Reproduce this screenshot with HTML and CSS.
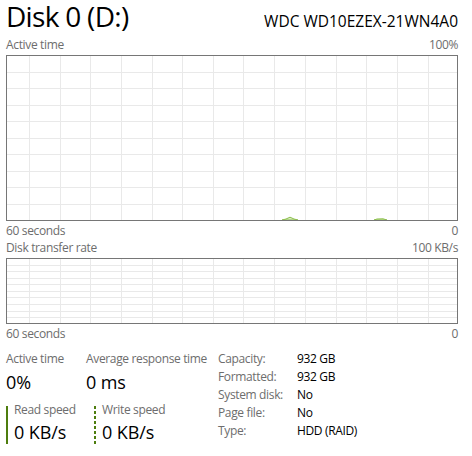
FILE: index.html
```html
<!DOCTYPE html>
<html lang="en">
<head>
<meta charset="utf-8">
<title>Disk 0 (D:)</title>
<link rel="stylesheet" href="styles.css">
</head>
<body>
<div class="page">
  <header class="head">
    <h1 class="title">Disk 0 (D:)</h1>
    <div class="model">WDC WD10EZEX-21WN4A0</div>
  </header>

  <div class="axis axis-top"><span>Active time</span><span>100%</span></div>
  <div class="graph graph-tall">
    <svg class="grid" width="450" height="164" viewBox="0 0 450 164" shape-rendering="crispEdges">
      <g class="gridlines">
        <rect x="22" y="0" width="1" height="164"/><rect x="53" y="0" width="1" height="164"/>
        <rect x="83" y="0" width="1" height="164"/><rect x="114" y="0" width="1" height="164"/>
        <rect x="145" y="0" width="1" height="164"/><rect x="175" y="0" width="1" height="164"/>
        <rect x="206" y="0" width="1" height="164"/><rect x="236" y="0" width="1" height="164"/>
        <rect x="267" y="0" width="1" height="164"/><rect x="298" y="0" width="1" height="164"/>
        <rect x="329" y="0" width="1" height="164"/><rect x="359" y="0" width="1" height="164"/>
        <rect x="390" y="0" width="1" height="164"/><rect x="421" y="0" width="1" height="164"/>
        <rect x="0" y="16" width="450" height="1"/><rect x="0" y="32" width="450" height="1"/>
        <rect x="0" y="49" width="450" height="1"/><rect x="0" y="65" width="450" height="1"/>
        <rect x="0" y="82" width="450" height="1"/><rect x="0" y="98" width="450" height="1"/>
        <rect x="0" y="115" width="450" height="1"/><rect x="0" y="131" width="450" height="1"/>
        <rect x="0" y="148" width="450" height="1"/>
      </g>
      <g class="trace" shape-rendering="auto">
        <path d="M275 164 L279 163 L283 161.2 L287 163 L291 164 Z"/>
        <path d="M367 164 L370 163 L376 162.8 L380 164 Z"/>
      </g>
    </svg>
  </div>
  <div class="axis axis-bottom"><span>60 seconds</span><span>0</span></div>

  <div class="axis axis-top axis-gap"><span>Disk transfer rate</span><span>100 KB/s</span></div>
  <div class="graph graph-short">
    <svg class="grid" width="450" height="64" viewBox="0 0 450 64" shape-rendering="crispEdges">
      <g class="gridlines">
        <rect x="22" y="0" width="1" height="64"/><rect x="53" y="0" width="1" height="64"/>
        <rect x="83" y="0" width="1" height="64"/><rect x="114" y="0" width="1" height="64"/>
        <rect x="145" y="0" width="1" height="64"/><rect x="175" y="0" width="1" height="64"/>
        <rect x="206" y="0" width="1" height="64"/><rect x="236" y="0" width="1" height="64"/>
        <rect x="267" y="0" width="1" height="64"/><rect x="298" y="0" width="1" height="64"/>
        <rect x="329" y="0" width="1" height="64"/><rect x="359" y="0" width="1" height="64"/>
        <rect x="390" y="0" width="1" height="64"/><rect x="421" y="0" width="1" height="64"/>
        <rect x="0" y="6" width="450" height="1"/><rect x="0" y="12" width="450" height="1"/>
        <rect x="0" y="19" width="450" height="1"/><rect x="0" y="25" width="450" height="1"/>
        <rect x="0" y="32" width="450" height="1"/><rect x="0" y="38" width="450" height="1"/>
        <rect x="0" y="45" width="450" height="1"/><rect x="0" y="52" width="450" height="1"/>
        <rect x="0" y="58" width="450" height="1"/>
      </g>
    </svg>
  </div>
  <div class="axis axis-bottom"><span>60 seconds</span><span>0</span></div>

  <section class="stats">
    <div class="stats-left">
      <div class="stat-row">
        <div class="stat stat-active">
          <div class="stat-label">Active time</div>
          <div class="stat-value">0%</div>
        </div>
        <div class="stat">
          <div class="stat-label">Average response time</div>
          <div class="stat-value">0 ms</div>
        </div>
      </div>
      <div class="stat-row speed-row">
        <div class="stat speed speed-read">
          <div class="stat-label">Read speed</div>
          <div class="stat-value">0 KB/s</div>
        </div>
        <div class="stat speed speed-write">
          <div class="stat-label">Write speed</div>
          <div class="stat-value">0 KB/s</div>
        </div>
      </div>
    </div>
    <dl class="details">
      <dt>Capacity:</dt><dd>932 GB</dd>
      <dt>Formatted:</dt><dd>932 GB</dd>
      <dt>System disk:</dt><dd>No</dd>
      <dt>Page file:</dt><dd>No</dd>
      <dt>Type:</dt><dd>HDD (RAID)</dd>
    </dl>
  </section>
</div>
</body>
</html>
```

FILE: styles.css
```css
html, body {
  margin: 0;
  padding: 0;
  background: #ffffff;
}

body {
  font-family: "Open Sans", "Noto Sans", sans-serif;
  color: #000000;
  width: 472px;
  height: 456px;
  overflow: hidden;
}

.page {
  padding: 0 14px 0 6px;
}

.head {
  display: flex;
  justify-content: space-between;
  align-items: baseline;
  height: 34px;
  margin-bottom: 3px;
}

.title {
  margin: 0;
  font-size: 28px;
  font-weight: 400;
  line-height: 33px;
  letter-spacing: -0.7px;
}

.model {
  font-size: 15.5px;
  line-height: 20px;
  letter-spacing: 0;
}

.axis {
  display: flex;
  justify-content: space-between;
  font-size: 12px;
  line-height: 16px;
  color: #6d6d6d;
  letter-spacing: -0.35px;
}

.axis-top {
  margin-bottom: 2px;
}

.axis-bottom {
  margin-top: 2px;
}

.axis-gap {
  margin-top: 1px;
}

.graph {
  border: 1px solid #767676;
  background: #ffffff;
}

.graph-tall {
  height: 164px;
}

.graph-short {
  height: 64px;
}

.grid {
  display: block;
}

.gridlines rect {
  fill: #e9e9e9;
}

.trace path {
  fill: #d8ebc4;
  stroke: #8cbf4c;
  stroke-width: 1;
}

.stats {
  display: flex;
  margin-top: 8px;
}

.stats-left {
  width: 212px;
}

.stat-row {
  display: flex;
}

.stat {
  display: flex;
  flex-direction: column;
}

.stat-active {
  width: 80px;
}

.stat-label {
  font-size: 12px;
  line-height: 18px;
  color: #6d6d6d;
  letter-spacing: -0.35px;
}

.stat-value {
  font-size: 18px;
  line-height: 24px;
  margin-top: 2px;
  letter-spacing: -0.1px;
}

.speed-row {
  margin-top: 8px;
}

.speed .stat-label {
  line-height: 16px;
}

.speed .stat-value {
  margin-top: 2px;
}

.speed {
  padding-left: 8px;
}

.speed-read {
  width: 80px;
  background: linear-gradient(#4e7d0e, #4e7d0e) no-repeat left 4px / 2px calc(100% - 3px);
}

.speed-write {
  background: repeating-linear-gradient(to bottom, #4e7d0e 0 3px, transparent 3px 5px) no-repeat left 4px / 2px calc(100% - 3px);
}

.details {
  margin: 0;
  display: grid;
  grid-template-columns: 79px auto;
  align-content: start;
  font-size: 12px;
  line-height: 18px;
  letter-spacing: -0.35px;
}

.details dt {
  color: #6d6d6d;
}

.details dd {
  margin: 0;
  color: #000000;
}
```
